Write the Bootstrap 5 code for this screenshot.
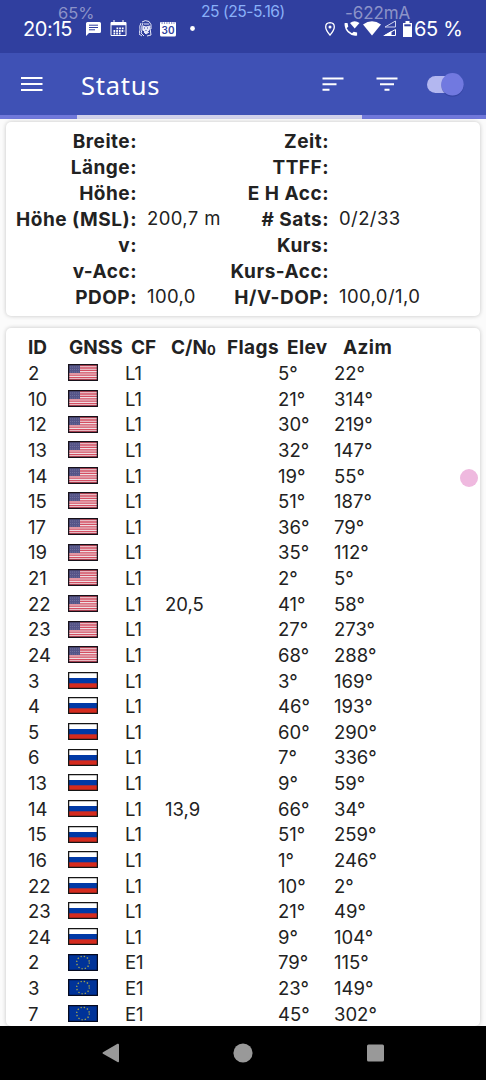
<!DOCTYPE html>
<html lang="de">
<head>
<meta charset="utf-8">
<meta name="viewport" content="width=device-width, initial-scale=1">
<title>Status</title>
<link href="https://cdn.jsdelivr.net/npm/bootstrap@5.3.0/dist/css/bootstrap.min.css" rel="stylesheet">
<style>
  body { font-family: Inter, "Noto Sans", sans-serif; background: #fbfbfb; color: #222; height: 1080px; overflow: hidden; }
  svg { display: block; flex: none; }
  .sysbar { height: 53px; background: #303f9f; color: #fff; padding: 4px 23px 0; }
  .sysbar .clock { font-size: 20px; width: 63px; letter-spacing: -.35px; line-height: 50px; }
  .sysbar .charge { font-size: 20px; letter-spacing: -.3px; line-height: 50px; margin-left: 2px; width: 49px; white-space: nowrap; }
  .meter { position: absolute; line-height: 16px; white-space: nowrap; }
  .meter-pct { left: 58px; top: 5px; font-size: 16.5px; color: #8c93c8; }
  .meter-temp { left: 201px; top: 4px; font-size: 15.6px; color: #8ab0f8; letter-spacing: -.45px; }
  .meter-amp { left: 345px; top: 5px; font-size: 17px; color: #8c93c8; letter-spacing: -.1px; }
  .appbar { height: 62px; background: #3f51b5; color: #fff; padding: 0 22px 0 21px; }
  .appbar h1 { font-family: "Noto Sans", sans-serif; font-size: 25.5px; font-weight: 400; letter-spacing: .75px; line-height: 62px; margin-left: 38px; padding-top: 1px; }
  .tabstrip { height: 4px; background: #7078da; }
  .tabstrip .chosen { width: 285px; margin-left: 77px; background: #d0d0ea; height: 4px; }
  .panel { margin: 0 6px; width: 474px; border: 0; border-radius: 5px; background: #fff; box-shadow: 0 0 4px rgba(0,0,0,.22); }
  .facts { margin-top: 3px; height: 194px; padding-top: 7px; display: grid; grid-template-columns: 131px 90px 102px 1fr; grid-auto-rows: 26px; line-height: 26px; font-size: 18.5px; }
  .facts dt { text-align: right; font-weight: 700; white-space: nowrap; font-size: 19px; letter-spacing: .5px; }
  .facts dd { margin: 0; padding-left: 10px; line-height: 23px; white-space: nowrap; letter-spacing: .4px; }
  .facts dd + dt { margin-left: -20px; }
  .sats { margin-top: 12px; flex: 1; min-height: 0; overflow: hidden; clip-path: inset(-4px -4px 0 -4px); padding: 7px 0 0 22px; }
  .satline { display: grid; grid-template-columns: 40px 57px 40px 113px 56px 1fr; height: 25.64px; line-height: 25.64px; font-size: 18.5px; white-space: nowrap; }
  .headline { display: grid; grid-template-columns: 41px 62px 40px 56px 60px 56px 1fr; height: 26px; line-height: 26px; font-size: 19px; font-weight: 700; white-space: nowrap; }
  .headline span:nth-child(n+5) { letter-spacing: .4px; }
  .headline sub { font-size: 13px; bottom: -.1em; line-height: 1; }
  .satline svg { align-self: center; margin-top: -2px; }
  .sysnav { height: 54px; background: #000; }
  .bubble { position: absolute; left: 460px; top: 469px; width: 18px; height: 18px; border-radius: 50%; background: #efb9df; }
</style>
</head>
<body class="d-flex flex-column position-relative">
<svg width="0" height="0" class="position-absolute">
  <defs>
    <symbol id="us" viewBox="0 0 30 17">
      <rect width="30" height="17" fill="#efdde2"/>
      <path d="M1 1.6H29M1 4H29M1 6.4H29M1 8.8H29M1 11.2H29M1 13.6H29M1 15.6H29" stroke="#d44e62" stroke-width="1.3"/>
      <rect x="1" y="1" width="11" height="8" fill="#555488"/>
      <path d="M2 3H11M2 5.5H11M2 8H11" stroke="#8583aa" stroke-width=".6" stroke-dasharray="1 1"/>
      <rect x=".6" y=".6" width="28.8" height="15.8" fill="none" stroke="#16111a" stroke-width="1.3"/>
    </symbol>
    <symbol id="ru" viewBox="0 0 30 17">
      <rect width="30" height="17" fill="#fff"/><rect y="6" width="30" height="6" fill="#0039a6"/><rect y="11.3" width="30" height="6" fill="#d52b1e"/>
      <rect x=".6" y=".6" width="28.8" height="15.8" fill="none" stroke="#151515" stroke-width="1.3"/>
    </symbol>
    <symbol id="eu" viewBox="0 0 30 17">
      <rect width="30" height="17" fill="#003399"/>
      <circle cx="15" cy="8.5" r="6.3" fill="none" stroke="#a5a64c" stroke-width="1.3" stroke-dasharray="1.3 2"/>
      <rect x=".6" y=".6" width="28.8" height="15.8" fill="none" stroke="#050a20" stroke-width="1.3"/>
    </symbol>
  </defs>
</svg>

<header class="sysbar d-flex align-items-center position-relative flex-shrink-0">
  <span class="clock">20:15</span>
  <svg width="15" height="14" viewBox="0 0 15 14"><path fill="#fff" d="M1.500 0h12Q15 0 15 1.500v8q0 1.500-1.500 1.500H3L0 14V1.500Q0 0 1.500 0Z"/><path d="M3 3.200h9M3 5.500h9M3 7.800h6" stroke="#303f9f" stroke-width="1"/></svg>
  <svg style="margin-left:9px" width="17" height="17" viewBox="0 0 17 17" fill="none" stroke="#fff"><path d="M1 2.500h15v13H1zM4 0v4M13 0v4"/><path d="M1 4h15" stroke-width="2.500"/><path d="M6.500 8.300h8M3.500 11h11M3.500 13.500h8" stroke-width="1.800" stroke-dasharray="1.700 1"/></svg>
  <svg style="margin-left:12px" width="13" height="17" viewBox="0 0 13 17" fill="none" stroke="#e6e8f8" stroke-width="1"><path d="M3 2Q6-.5 10 1.500 13 4 12 9M2 3Q0 6 1 10L0 14l3 2M4 3Q2 6 3 10L2 13l3 3M11 8l1 7-4 1"/><path d="M4 6l3 1 4-1-1 4-3 3-3-3zM5 4h5M5 12l2 2 3-2" fill="#e6e8f8"/><path d="M5 8h1M8 8h1M7 10v1" stroke="#303f9f"/></svg>
  <svg style="margin-left:8px" width="16" height="16" viewBox="0 0 16 16"><path fill="#fff" d="M1 1h14q1 0 1 1v12q0 1.500-1.500 1.500h-13Q0 15.500 0 14V2Q0 1 1 1Z"/><path d="M1.500 2h13" stroke="#303f9f" stroke-width="1.200" stroke-dasharray="1.200 1.200"/><text x="8" y="12.600" text-anchor="middle" font-family="Inter" font-size="10" font-weight="600" fill="#303f9f">30</text></svg>
  <svg style="margin-left:14px" width="5" height="5"><circle cx="2.500" cy="2.500" r="2.400" fill="#fff"/></svg>
  <svg class="ms-auto" width="10" height="14" viewBox="0 0 10 14"><path d="M5 .7Q9.300.9 9.300 5 9.300 8 5 13.200.7 8 .7 5 .7.900 5 .7Z" fill="none" stroke="#fff" stroke-width="1.300"/><circle cx="5" cy="5" r="1.500" fill="#fff"/></svg>
  <svg style="margin-left:9px" width="16" height="16" viewBox="0 0 16 16" fill="#fff"><path d="M6 2Q10.500-1.500 15.500 2L10.700 7.500Z"/><path d="M1 2h2.500l.8 3.500-1.600 1.700Q4.500 11 8 12.200l1.700-1.500 3.400.7V14.500Q8 15.500 4 11.500.500 8 .500 2.500Z"/></svg>
  <svg style="margin-left:3px" width="18" height="15" viewBox="0 0 18 15"><path fill="#fff" d="M0 3.500Q9-3 18 3.500L9 14.500Z"/></svg>
  <svg style="margin-left:2px" width="14" height="17" viewBox="0 0 14 17"><path d="M2 7L12.500 1V7Z" fill="none" stroke="#cfd3ee"/><path d="M1.500 15.500L12.500 9.500v6Z" fill="none" stroke="#fff"/><path fill="#fff" d="M0 16L8.500 11v5Z"/></svg>
  <svg style="margin-left:6px" width="9" height="16" viewBox="0 0 9 16"><path fill="#fff" d="M2.500 0h4v2H9v14H0V2h2.500Z"/><path fill="#303f9f" d="M1.300 3.300h6.400v2H1.300z"/></svg>
  <span class="charge">65 %</span>
  <span class="meter meter-pct">65%</span>
  <span class="meter meter-temp">25 (25-5.16)</span>
  <span class="meter meter-amp">-622mA</span>
</header>

<nav class="appbar d-flex align-items-center flex-shrink-0">
  <svg width="22" height="16" viewBox="0 0 22 16"><path d="M0 2h21.500M0 8h21.500M0 14h21.500" stroke="#fff" stroke-width="2"/></svg>
  <h1 class="mb-0">Status</h1>
  <svg class="ms-auto" width="22" height="16" viewBox="0 0 22 16"><path d="M.5 2.500h21M.5 8.200h14M.5 13.800h7" stroke="#fff" stroke-width="2"/></svg>
  <svg style="margin-left:32px" width="22" height="16" viewBox="0 0 22 16"><path d="M.5 2.500h21M4 8.200h14M8.500 13.800h5" stroke="#fff" stroke-width="2"/></svg>
  <svg style="margin-left:29px" width="37" height="26" viewBox="0 0 37 26"><rect x="0" y="5" width="34" height="17" rx="8.500" fill="#b3b7f0"/><circle cx="25.500" cy="14.500" r="11.200" fill="#2c3a91" opacity=".5"/><circle cx="25.500" cy="13.300" r="11.200" fill="#7179e0"/></svg>
</nav>
<div class="tabstrip flex-shrink-0"><div class="chosen"></div></div>

<dl class="panel facts mb-0 flex-shrink-0">
  <dt>Breite:</dt><dd></dd><dt>Zeit:</dt><dd></dd>
  <dt>Länge:</dt><dd></dd><dt>TTFF:</dt><dd></dd>
  <dt>Höhe:</dt><dd></dd><dt>E H Acc:</dt><dd></dd>
  <dt>Höhe (MSL):</dt><dd>200,7 m</dd><dt># Sats:</dt><dd>0/2/33</dd>
  <dt>v:</dt><dd></dd><dt>Kurs:</dt><dd></dd>
  <dt>v-Acc:</dt><dd></dd><dt>Kurs-Acc:</dt><dd></dd>
  <dt>PDOP:</dt><dd>100,0</dd><dt>H/V-DOP:</dt><dd>100,0/1,0</dd>
</dl>

<main class="panel sats" id="sats">
  <div class="headline"><span>ID</span><span>GNSS</span><span>CF</span><span>C/N<sub>0</sub></span><span>Flags</span><span>Elev</span><span>Azim</span></div>
</main>

<footer class="sysnav flex-shrink-0">
  <svg width="486" height="54" fill="#999"><path d="M103 26.200L117.500 17.800Q119 17.300 119 19V35Q119 36.800 117.500 36L103 27.800Q101.800 27 103 26.200Z"/><circle cx="243" cy="27" r="9.600"/><rect x="367" y="18.500" width="17" height="17" rx="1.500"/></svg>
</footer>
<div class="bubble"></div>

<script src="https://cdn.jsdelivr.net/npm/bootstrap@5.3.0/dist/js/bootstrap.bundle.min.js"></script>
<script>
  // id, constellation, elevation, azimuth, signal strength
  const satellites = [
    [2,'us',5,22],[10,'us',21,314],[12,'us',30,219],[13,'us',32,147],[14,'us',19,55],[15,'us',51,187],
    [17,'us',36,79],[19,'us',35,112],[21,'us',2,5],[22,'us',41,58,'20,5'],[23,'us',27,273],[24,'us',68,288],
    [3,'ru',3,169],[4,'ru',46,193],[5,'ru',60,290],[6,'ru',7,336],[13,'ru',9,59],[14,'ru',66,34,'13,9'],
    [15,'ru',51,259],[16,'ru',1,246],[22,'ru',10,2],[23,'ru',21,49],[24,'ru',9,104],
    [2,'eu',79,115],[3,'eu',23,149],[7,'eu',45,302]
  ];
  document.getElementById('sats').insertAdjacentHTML('beforeend', satellites.map(([id, sys, elev, azim, cn = '']) =>
    `<div class="satline"><span>${id}</span><svg width="30" height="17"><use href="#${sys}"/></svg><span>${sys === 'eu' ? 'E1' : 'L1'}</span><span>${cn}</span><span>${elev}°</span><span>${azim}°</span></div>`).join(''));
</script>
</body>
</html>
